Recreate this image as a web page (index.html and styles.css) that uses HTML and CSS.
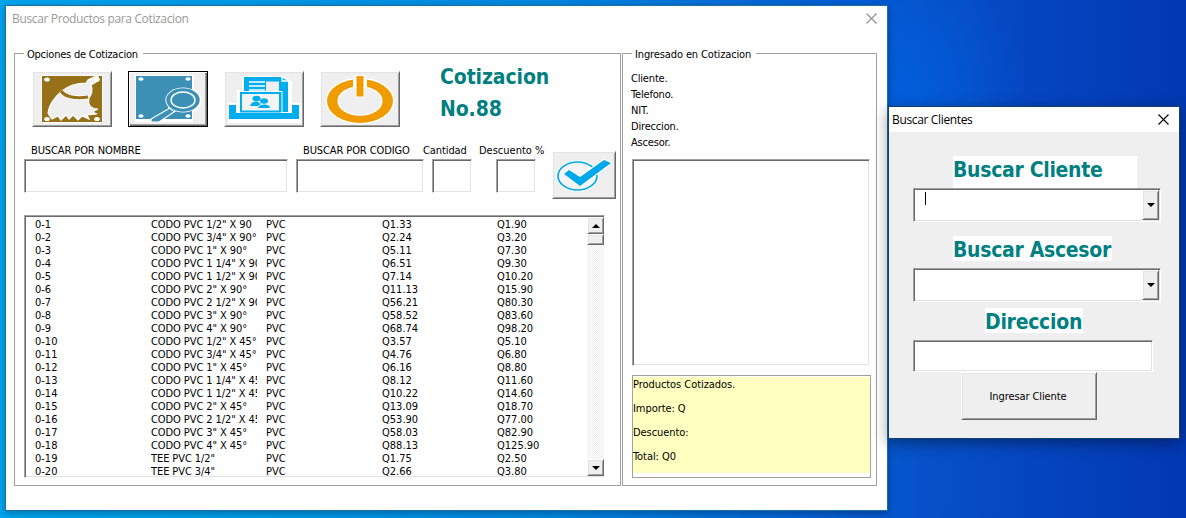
FILE: index.html
```html
<!DOCTYPE html>
<html lang="es">
<head>
<meta charset="utf-8">
<title>Buscar Productos para Cotizacion</title>
<link rel="stylesheet" href="styles.css">
</head>
<body>
<main class="desktop">
  <section class="window products">
    <header class="titlebar">
      <span>Buscar Productos para Cotizacion</span>
      <svg class="close" width="11" height="11" viewBox="0 0 11 11"><path d="M.5 .5l10 10M10.5 .5l-10 10"/></svg>
    </header>
    <div class="frames">
      <fieldset class="options">
        <legend>Opciones de Cotizacion</legend>
        <div class="toolbar">
          <button class="btn tool">
            <svg width="76" height="52" viewBox="0 0 76 52">
              <rect x="7" y="2" width="62" height="48" fill="#fff"/>
              <rect x="8" y="3" width="60" height="46" fill="#967117"/>
              <path d="M62 3L54 7L52 10C43 10 34 13 28 18C21 24 15 31 14 40L18 46L24 43L27 47L32 42L35 46L39 42L44 47L48 43L55 46L53 42L63 41L58 39L64 36C54 36 54 29 55 25C58 21 59 17 57 12L64 8V3Z" fill="#efefef" stroke="#fff" stroke-width="1.2"/>
              <path d="M27 18C31 24 42 26 54 24" fill="none" stroke="#fff" stroke-width="4.6"/>
              <path d="M27 18C31 24 42 26 54 24" fill="none" stroke="#967117" stroke-width="3.2"/>
              <g fill="#fff"><ellipse cx="13" cy="6.500" rx="2.800" ry="2"/><ellipse cx="63" cy="6.500" rx="2.800" ry="2"/><ellipse cx="13" cy="46" rx="2.800" ry="2"/><ellipse cx="63" cy="46" rx="2.800" ry="2"/></g>
            </svg>
          </button>
          <button class="btn tool focused">
            <svg width="76" height="52" viewBox="0 0 76 52">
              <path d="M5 2H64V16Q73 20 71 31Q69 38 63 39V49H5Z" fill="#fff"/>
              <rect x="6" y="3" width="56" height="43" fill="#3d90b5"/>
              <g fill="#fff"><ellipse cx="11" cy="6" rx="2.600" ry="1.800"/><ellipse cx="58" cy="6" rx="2.600" ry="1.800"/><ellipse cx="11" cy="43" rx="2.600" ry="1.800"/><ellipse cx="58" cy="43" rx="2.600" ry="1.800"/></g>
              <path d="M43 34L47 37L29 49L21 49L21 46L40 35Z" fill="#3d90b5" stroke="#fff" stroke-width="1.200"/>
              <path d="M38 34L44 39" stroke="#fff"/>
              <ellipse cx="53" cy="27" rx="17.600" ry="12.500" fill="#fff"/>
              <ellipse cx="53" cy="27" rx="16.700" ry="11.700" fill="#3d90b5"/>
              <ellipse cx="53" cy="27" rx="12" ry="8" fill="none" stroke="#fff" stroke-width="1.400"/>
            </svg>
          </button>
          <button class="btn tool">
            <svg width="76" height="52" viewBox="0 0 76 52">
              <path d="M2 30H11V17H16V3H58L66 9V30H76V50H2Z" fill="#fff"/>
              <path d="M3 32H10V40H66V32H73V46H3Z" fill="#00adef"/>
              <path d="M18 4H55L62 8V39H55V19H18Z" fill="#00adef"/>
              <path d="M40 8.500H53V18H40Z" fill="#efefef"/>
              <path d="M23 9H39M23 13H39M23 17H39M56 4V8H63" fill="none" stroke="#fff" stroke-width="1.300"/>
              <path d="M15 20H54V38.500H15Z" fill="#f4f4f4" stroke="#00adef" stroke-width="2"/>
              <path d="M13 18.500H56M13 18V40M56 18V40" stroke="#fff" stroke-width="1"/>
              <g fill="#00adef"><ellipse cx="30.500" cy="25.500" rx="4" ry="2.800"/><path d="M24 33Q25 28.500 31 28.500L35 31L32 33Z"/><ellipse cx="38" cy="28" rx="4" ry="2.800"/><path d="M32 35Q33 31.500 39 31.500Q44 32 44 35Z"/></g>
            </svg>
          </button>
          <button class="btn tool">
            <svg width="76" height="52" viewBox="0 0 76 52">
              <ellipse cx="38" cy="28" rx="34.500" ry="23.500" fill="#fff"/>
              <ellipse cx="38" cy="28" rx="33" ry="22" fill="#f09c00"/>
              <ellipse cx="38" cy="28" rx="22.600" ry="15" fill="#fff"/>
              <ellipse cx="38" cy="28" rx="21" ry="13.800" fill="#efefef"/>
              <path d="M31 3H45V15H31Z" fill="#fff"/>
              <path d="M34 2.500H42V24H34Z" fill="#f09c00" stroke="#fff" stroke-width="1"/>
            </svg>
          </button>
          <h1 class="quote">Cotizacion<br>No.88</h1>
        </div>
        <div class="search">
          <label class="field name"><span>BUSCAR POR NOMBRE</span><i class="sunken"></i></label>
          <label class="field code"><span>BUSCAR POR CODIGO</span><i class="sunken"></i></label>
          <label class="field qty"><span>Cantidad</span><i class="sunken"></i></label>
          <label class="field disc"><span>Descuento %</span><i class="sunken"></i></label>
          <button class="btn accept">
            <svg width="60" height="44" viewBox="0 0 60 44">
              <ellipse cx="23.500" cy="23" rx="21.500" ry="16" fill="#fff"/>
              <ellipse cx="23.500" cy="23" rx="19.500" ry="14" fill="#f4f4f4" stroke="#00a9ec" stroke-width="1.700"/>
              <path d="M10 21L15 17L26 24L50 7L57 10L26 33Z" fill="#00a9ec" stroke="#fff" stroke-width="2.400" paint-order="stroke"/>
            </svg>
          </button>
        </div>
        <div class="list sunken">
          <div class="rows">
            <div class="row"><span>0-1</span><span>CODO PVC 1/2" X 90</span><span>PVC</span><span>Q1.33</span><span>Q1.90</span></div>
            <div class="row"><span>0-2</span><span>CODO PVC 3/4" X 90°</span><span>PVC</span><span>Q2.24</span><span>Q3.20</span></div>
            <div class="row"><span>0-3</span><span>CODO PVC 1" X 90°</span><span>PVC</span><span>Q5.11</span><span>Q7.30</span></div>
            <div class="row"><span>0-4</span><span>CODO PVC 1 1/4" X 90</span><span>PVC</span><span>Q6.51</span><span>Q9.30</span></div>
            <div class="row"><span>0-5</span><span>CODO PVC 1 1/2" X 90</span><span>PVC</span><span>Q7.14</span><span>Q10.20</span></div>
            <div class="row"><span>0-6</span><span>CODO PVC 2" X 90°</span><span>PVC</span><span>Q11.13</span><span>Q15.90</span></div>
            <div class="row"><span>0-7</span><span>CODO PVC 2 1/2" X 90</span><span>PVC</span><span>Q56.21</span><span>Q80.30</span></div>
            <div class="row"><span>0-8</span><span>CODO PVC 3" X 90°</span><span>PVC</span><span>Q58.52</span><span>Q83.60</span></div>
            <div class="row"><span>0-9</span><span>CODO PVC 4" X 90°</span><span>PVC</span><span>Q68.74</span><span>Q98.20</span></div>
            <div class="row"><span>0-10</span><span>CODO PVC 1/2" X 45°</span><span>PVC</span><span>Q3.57</span><span>Q5.10</span></div>
            <div class="row"><span>0-11</span><span>CODO PVC 3/4" X 45°</span><span>PVC</span><span>Q4.76</span><span>Q6.80</span></div>
            <div class="row"><span>0-12</span><span>CODO PVC 1" X 45°</span><span>PVC</span><span>Q6.16</span><span>Q8.80</span></div>
            <div class="row"><span>0-13</span><span>CODO PVC 1 1/4" X 45</span><span>PVC</span><span>Q8.12</span><span>Q11.60</span></div>
            <div class="row"><span>0-14</span><span>CODO PVC 1 1/2" X 45</span><span>PVC</span><span>Q10.22</span><span>Q14.60</span></div>
            <div class="row"><span>0-15</span><span>CODO PVC 2" X 45°</span><span>PVC</span><span>Q13.09</span><span>Q18.70</span></div>
            <div class="row"><span>0-16</span><span>CODO PVC 2 1/2" X 45</span><span>PVC</span><span>Q53.90</span><span>Q77.00</span></div>
            <div class="row"><span>0-17</span><span>CODO PVC 3" X 45°</span><span>PVC</span><span>Q58.03</span><span>Q82.90</span></div>
            <div class="row"><span>0-18</span><span>CODO PVC 4" X 45°</span><span>PVC</span><span>Q88.13</span><span>Q125.90</span></div>
            <div class="row"><span>0-19</span><span>TEE PVC 1/2"</span><span>PVC</span><span>Q1.75</span><span>Q2.50</span></div>
            <div class="row"><span>0-20</span><span>TEE PVC 3/4"</span><span>PVC</span><span>Q2.66</span><span>Q3.80</span></div>
          </div>
          <div class="scrollbar">
            <div class="btn arrow"><svg width="8" height="4" viewBox="0 0 8 4"><path d="M0 4L4 0L8 4Z"/></svg></div>
            <div class="btn thumb"></div>
            <div class="btn arrow down"><svg width="8" height="4" viewBox="0 0 8 4"><path d="M0 0L4 4L8 0Z"/></svg></div>
          </div>
        </div>
      </fieldset>
      <fieldset class="entered">
        <legend>Ingresado en Cotizacion</legend>
        <div class="client">
          <p>Cliente.</p><p>Telefono.</p><p>NIT.</p><p>Direccion.</p><p>Ascesor.</p>
        </div>
        <div class="items sunken"></div>
        <div class="totals">
          <div class="note"><p>Productos Cotizados.</p><p>Importe: Q</p><p>Descuento:</p><p>Total: Q0</p></div>
        </div>
      </fieldset>
    </div>
  </section>

  <section class="window clients">
    <header class="titlebar">
      <span>Buscar Clientes</span>
      <svg class="close" width="11" height="11" viewBox="0 0 11 11"><path d="M.5 .5l10 10M10.500 .5l-10 10"/></svg>
    </header>
    <div class="form">
      <h2 class="tag tag-client">Buscar Cliente</h2>
      <div class="combo sunken"><i class="caret"></i><div class="btn drop"><svg width="8" height="4" viewBox="0 0 8 4"><path d="M0 0L4 4L8 0Z"/></svg></div></div>
      <h2 class="tag tag-advisor">Buscar Ascesor</h2>
      <div class="combo sunken"><div class="btn drop"><svg width="8" height="4" viewBox="0 0 8 4"><path d="M0 0L4 4L8 0Z"/></svg></div></div>
      <h2 class="tag tag-address">Direccion</h2>
      <div class="address sunken"></div>
      <button class="btn submit">Ingresar Cliente</button>
    </div>
  </section>
</main>
</body>
</html>
```
FILE: styles.css
```css
* { box-sizing: border-box; }
body, p, h1, h2, fieldset, legend, button { margin: 0; padding: 0; }
body {
  font: 11px/13px "DejaVu Sans Condensed", "DejaVu Sans", sans-serif;
  color: #000;
  overflow: hidden;
}
.desktop {
  position: relative;
  width: 1186px;
  height: 518px;
  background:
    radial-gradient(ellipse 120px 130px at 905px 88px, rgba(0, 100, 230, .6), transparent),
    linear-gradient(90deg, #00a4ee 0, #009ae8 250px, #0086e0 550px, #0462d4 800px, #0650c8 930px, #0440bb 1090px, #0238b2 1186px);
}
.window { position: absolute; display: flex; flex-direction: column; background: #fff; }
.products {
  left: 5px; top: 5px; width: 883px; height: 506px;
  border: 1px solid #1b6ea6;
  box-shadow: 0 2px 7px rgba(0, 0, 0, .3);
}
.clients {
  left: 888px; top: 106px; width: 292px; height: 333px;
  border: 1px solid #14406c;
  background: #efefef;
  box-shadow: 0 4px 14px rgba(0, 0, 0, .4);
}
.titlebar {
  display: flex;
  align-items: center;
  justify-content: space-between;
  height: 25px;
  flex: none;
  padding: 0 10px 0 3px;
  font: 12px/16px "Open Sans", "Noto Sans", sans-serif;
  letter-spacing: -.35px;
  background: #fff;
}
.products .titlebar { color: #999; padding-left: 6px; }
.close { fill: none; stroke: #000; stroke-width: 1.1; }
.products .close { stroke: #8d8d8d; }

.frames { display: flex; gap: 1px; padding: 16px 0 0 8px; }
fieldset { min-width: 0; height: 439px; border: 1px solid #a0a0a0; }
legend { height: 13px; margin-left: 9px; padding: 1px 0 0 3px; white-space: nowrap; letter-spacing: -.23px; }
.options { width: 607px; }
.options legend { width: 119px; }
.entered { width: 255px; }
.entered legend { width: 124px; letter-spacing: -.12px; }

.btn {
  display: flex;
  align-items: center;
  justify-content: center;
  font: inherit;
  color: #000;
  background: #efefef;
  border: 1px solid;
  border-color: #fff #696969 #696969 #fff;
  border-radius: 0;
  box-shadow: inset 1px 1px #e3e3e3, inset -1px -1px #a0a0a0;
}
.sunken {
  background: #fff;
  border: 1px solid;
  border-color: #a0a0a0 #fff #fff #a0a0a0;
  box-shadow: inset 1px 1px #696969, inset -1px -1px #e3e3e3;
}
.btn svg { flex: none; }

.toolbar { display: flex; gap: 16px; padding: 11px 0 0 17px; }
.tool { width: 80px; height: 56px; }
.focused { border-color: #000; box-shadow: inset 1px 1px #fff, inset -1px -1px #696969, inset -2px -2px #a0a0a0; }
.quote {
  height: 66px;
  margin: -10px 0 0 24px;
  font-weight: bold;
  font-size: 21px;
  line-height: 32px;
  letter-spacing: -.1px;
  color: #008080;
}

.search { display: flex; padding: 17px 0 0 9px; height: 82px; }
.field { display: flex; flex-direction: column; height: 49px; white-space: nowrap; }
.field span { height: 15px; letter-spacing: -.1px; }
.field i { height: 34px; flex: none; }
.name { width: 264px; margin-right: 8px; }
.name span { padding-left: 7px; }
.code { width: 128px; margin-right: 8px; }
.code span { padding-left: 7px; }
.qty { width: 40px; margin-right: 24px; }
.qty span { margin-left: -9px; }
.disc { width: 40px; margin-right: 16px; }
.disc span { margin-left: -17px; letter-spacing: 0; }
.accept { width: 64px; height: 48px; margin-top: 7px; }

.list { display: flex; justify-content: space-between; width: 581px; height: 263px; margin: 6px 0 0 9px; padding: 1px 0 1px 1px; }
.rows { padding: 1px 0 0 9px; }
.row { display: grid; grid-template-columns: 116px 107px 124px 115px 80px; height: 13px; line-height: 13px; white-space: nowrap; }
.row span:nth-child(2) { letter-spacing: -.08px; width: 106px; overflow: hidden; }
.row span:nth-child(3) { padding-left: 8px; }
.scrollbar {
  display: flex;
  flex-direction: column;
  width: 17px;
  background: repeating-conic-gradient(#fff 0 25%, #efefef 0 50%) 0 0 / 2px 2px;
}
.arrow { height: 17px; }
.thumb { height: 11px; }
.down { margin-top: auto; }

.client { padding: 11px 0 0 8px; line-height: 16px; letter-spacing: -.18px; }
.items { width: 238px; height: 207px; margin: 8px 0 0 9px; }
.totals { width: 239px; height: 103px; margin: 9px 0 0 9px; padding-top: 1px; border: 1px solid #a0a0a0; }
.note { height: 96px; padding-top: 1px; background: #ffffc0; letter-spacing: -.06px; }
.note p { height: 24px; line-height: 14px; }
.note p:last-child { height: 14px; }

.form { display: flex; flex-direction: column; align-items: flex-start; padding: 24px 0 0 24px; }
.tag { padding-top: 1px; font-size: 21px; line-height: 26px; font-weight: bold; letter-spacing: -.32px; color: #008080; background: #fff; white-space: nowrap; }
.tag-client { width: 184px; height: 32px; margin-left: 40px; }
.tag-advisor { width: 159px; height: 25px; margin: 14px 0 7px 40px; }
.tag-address { width: 98px; height: 25px; margin: 6px 0 7px 72px; letter-spacing: -.28px; }
.combo { display: flex; width: 248px; height: 34px; padding: 1px; }
.caret { width: 1px; height: 13px; margin: 2px 0 0 10px; background: #000; }
.drop { width: 17px; height: 30px; margin: 0 0 0 auto; }
.address { width: 240px; height: 32px; }
.submit { width: 136px; height: 48px; margin-left: 48px; letter-spacing: -.1px; padding-right: 2px; }
```
